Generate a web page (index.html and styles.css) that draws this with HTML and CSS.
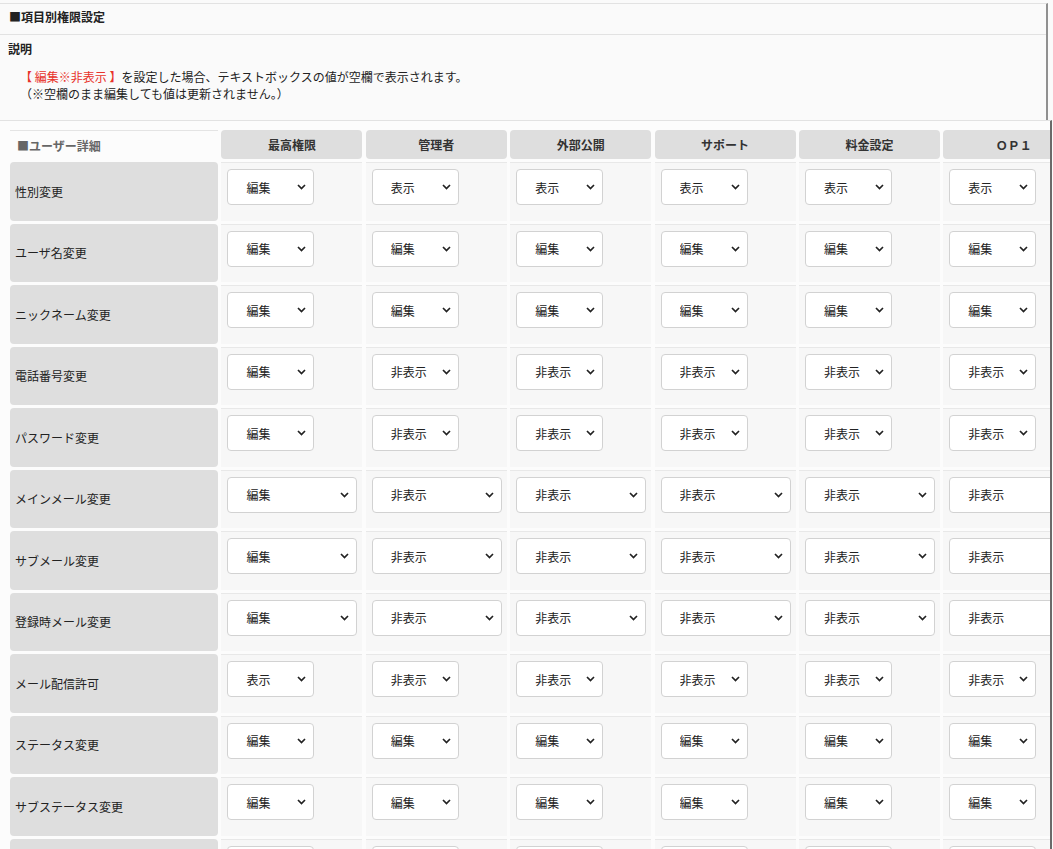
FILE: index.html
```html
<!DOCTYPE html>
<html lang="ja">
<head>
    <meta charset="UTF-8">
    <meta name="viewport" content="width=device-width, initial-scale=1.0">
    <title>項目別権限設定</title>
    <link rel="stylesheet" href="styles.css">
</head>
<body>
    <div class="section-head">
        <div class="section-title">■項目別権限設定</div>
        <div class="note">
            <div class="note-title">説明</div>
            <p class="note-text"><span class="red">【 編集※非表示 】</span>を設定した場合、テキストボックスの値が空欄で表示されます。<br>（※空欄のまま編集しても値は更新されません。）</p>
        </div>
    </div>

    <div class="table-wrap">
        <div class="perm" id="perm">
            <div class="perm-group">■ユーザー詳細</div>
            <div class="perm-role">最高権限</div>
            <div class="perm-role">管理者</div>
            <div class="perm-role">外部公開</div>
            <div class="perm-role">サポート</div>
            <div class="perm-role">料金設定</div>
            <div class="perm-role">ＯＰ１</div>
        </div>
    </div>

    <script>
        // [項目名, 最高権限の値, 他の権限の値, 幅広セレクト]
        const rows = [
            ['性別変更', '編集', '表示', false],
            ['ユーザ名変更', '編集', '編集', false],
            ['ニックネーム変更', '編集', '編集', false],
            ['電話番号変更', '編集', '非表示', false],
            ['パスワード変更', '編集', '非表示', false],
            ['メインメール変更', '編集', '非表示', true],
            ['サブメール変更', '編集', '非表示', true],
            ['登録時メール変更', '編集', '非表示', true],
            ['メール配信許可', '表示', '非表示', false],
            ['ステータス変更', '編集', '編集', false],
            ['サブステータス変更', '編集', '編集', false],
            ['', '編集', '編集', false]
        ];
        const options = ['編集', '表示', '非表示'];
        const perm = document.getElementById('perm');

        rows.forEach(([label, first, rest, wide]) => {
            const name = document.createElement('div');
            name.className = 'perm-label';
            name.textContent = label;
            perm.appendChild(name);

            [first, rest, rest, rest, rest, rest].forEach(value => {
                const cell = document.createElement('div');
                cell.className = 'perm-cell';
                const select = document.createElement('select');
                select.className = wide ? 'perm-select wide' : 'perm-select';
                options.forEach(o => select.add(new Option(o, o, o === value, o === value)));
                cell.appendChild(select);
                perm.appendChild(cell);
            });
        });
    </script>
</body>
</html>
```

FILE: styles.css
```css
* {
    box-sizing: border-box;
}

body {
    margin: 0;
    overflow: hidden;
    background-color: #fafafa;
    color: #222;
    font-family: "Noto Sans CJK JP", "Noto Sans", sans-serif;
    font-size: 12px;
}

/* 上部の説明エリア */
.section-head {
    margin: 3px 5px 0 0;
    border-top: 1px solid #e2e2e2;
    border-right: 2px solid #909090;
}

.section-title {
    padding: 4px 9px 8px;
    line-height: 18px;
    font-weight: bold;
    border-bottom: 1px solid #e2e2e2;
}

.note {
    padding: 5px 8px 18px;
}

.note-title {
    line-height: 18px;
    font-weight: bold;
}

.note-text {
    margin: 10px 0 0 12px;
    line-height: 17px;
}

.red {
    color: #e8332b;
}

/* 権限テーブル */
.table-wrap {
    margin-right: 1px;
    padding: 9px 0 0 10px;
    border-top: 1px solid #e2e2e2;
    border-right: 2px solid #6a6a6a;
    background-color: #fcfcfc;
    overflow: hidden;
}

.perm {
    display: grid;
    grid-template-columns: 208px repeat(6, 141px);
    grid-template-rows: 29px;
    grid-auto-rows: 58.5px;
    column-gap: 3.4px;
    row-gap: 3px;
    width: max-content;
}

.perm-group {
    display: flex;
    align-items: center;
    padding-left: 7px;
    border-top: 1px solid #e4e4e4;
    color: #666;
    font-weight: bold;
}

.perm-role {
    background-color: #dedede;
    border-radius: 4px;
    line-height: 29px;
    text-align: center;
    font-weight: bold;
    color: #333;
}

.perm-label {
    display: flex;
    align-items: center;
    padding-left: 5px;
    background-color: #dedede;
    border-radius: 4px;
}

.perm-cell {
    padding: 6px 0 0 6px;
    background-color: #f7f7f7;
    border-top: 1px solid #e8e8e8;
}

.perm-select {
    width: 87px;
    height: 36px;
    padding: 0 0 0 18px;
    border: 1px solid #d2d2d2;
    border-radius: 4px;
    background-color: #fff;
    background-image: url("data:image/svg+xml;utf8,<svg xmlns='http://www.w3.org/2000/svg' width='9' height='6' viewBox='0 0 9 6'><path d='M1 1l3.5 3.5L8 1' fill='none' stroke='%23222' stroke-width='1.7'/></svg>");
    background-repeat: no-repeat;
    background-position: right 7px center;
    color: #222;
    font: inherit;
    -webkit-appearance: none;
    appearance: none;
}

.perm-select.wide {
    width: 130px;
}
```
